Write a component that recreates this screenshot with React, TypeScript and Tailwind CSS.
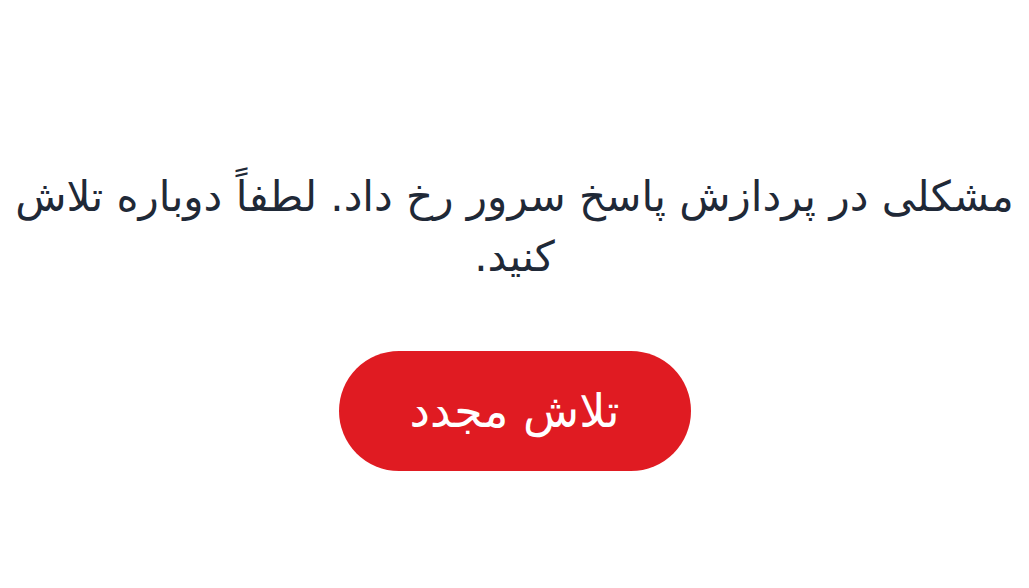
export default function App() {
  return (
    <div
      dir="rtl"
      className="flex min-h-screen w-full flex-col items-center justify-center bg-white px-2 pt-[50px]"
      style={{ fontFamily: '"DejaVu Sans", sans-serif' }}
    >
      <p className="text-center text-[42px] leading-[60px] text-[#1f2937]">
        مشکلی در پردازش پاسخ سرور رخ داد. لطفاً دوباره تلاش کنید.
      </p>
      <button className="mt-[64px] rounded-full bg-[#e01b22] px-[71px] py-[30px] text-[46px] leading-[60px] text-white">
        تلاش مجدد
      </button>
    </div>
  );
}
